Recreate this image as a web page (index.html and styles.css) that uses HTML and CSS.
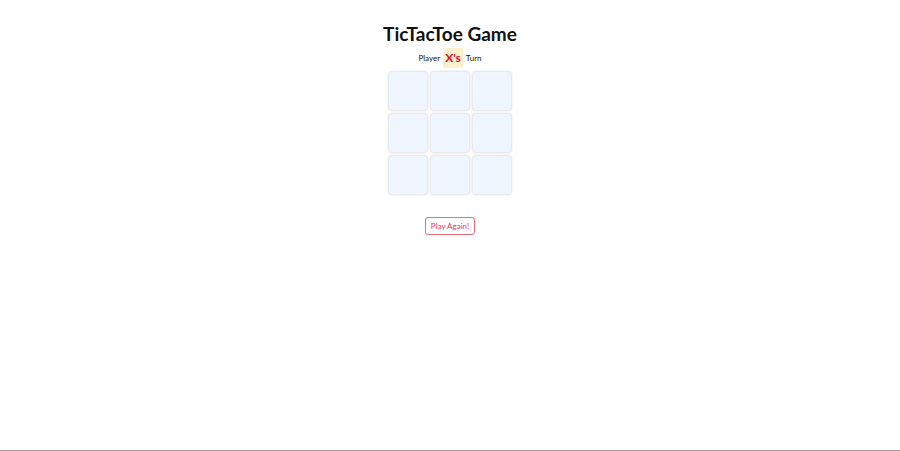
FILE: index.html
```html
<!DOCTYPE html>
<html>
<head>
<meta charset="utf-8">
<link rel="stylesheet" href="styles.css">
</head>
<body>
<div class="page">
  <h1 class="title">TicTacToe Game</h1>
  <div class="status">Player <span class="turn">X's</span> Turn</div>
  <div class="board">
    <div class="cell"></div><div class="cell"></div><div class="cell"></div>
    <div class="cell"></div><div class="cell"></div><div class="cell"></div>
    <div class="cell"></div><div class="cell"></div><div class="cell"></div>
  </div>
  <button class="again">Play Again!</button>
</div>
</body>
</html>
```
FILE: styles.css
```css
html, body { margin: 0; padding: 0; background: #fff; }
.page {
  height: 450px;
  border-bottom: 1px solid #9a9a9a;
  display: flex;
  flex-direction: column;
  align-items: center;
  font-family: Lato, "Noto Sans", sans-serif;
  color: #111;
}
.title {
  margin: 20px 0 0;
  font-size: 19px;
  line-height: 28px;
  font-weight: 700;
}
.status {
  margin-top: 0;
  font-size: 8px;
  line-height: 20px;
  display: flex;
  align-items: center;
  gap: 3px;
}
.turn {
  background: #fdf1cf;
  color: #e0102a;
  font-weight: 700;
  font-size: 12px;
  line-height: 20px;
  padding: 0 2px;
}
.board {
  margin-top: 4px;
  display: grid;
  grid-template-columns: repeat(3, 38px);
  grid-auto-rows: 38px;
  gap: 4px;
}
.cell {
  background: #eff6ff;
  border-radius: 3px;
  box-shadow: 0 0 2px 1px rgba(0,0,0,0.12);
}
.again {
  margin-top: 23px;
  font-family: inherit;
  font-size: 8px;
  color: #e04050;
  background: #fff;
  border: 1px solid #ea6d7a;
  border-radius: 3px;
  padding: 3px 5px;
  line-height: 10px;
}
```
